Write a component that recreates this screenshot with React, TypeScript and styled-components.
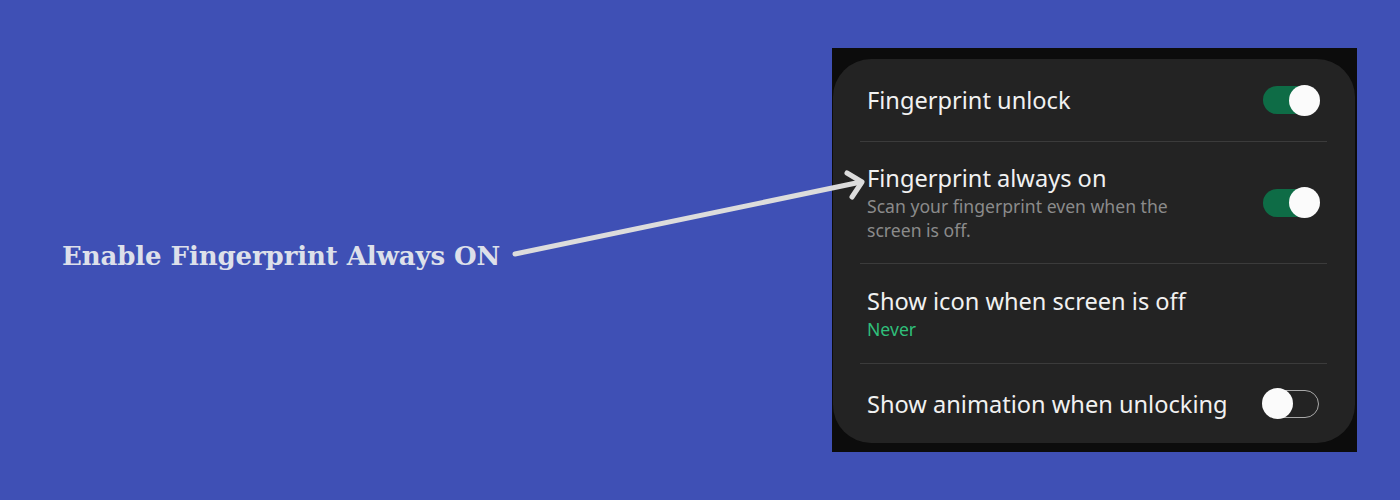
import React from 'react'
import styled, { createGlobalStyle } from 'styled-components'

const Global = createGlobalStyle`
  html, body {
    margin: 0;
    padding: 0;
    background: #3f50b5;
  }
`

const Stage = styled.div`
  position: relative;
  width: 1400px;
  height: 500px;
  display: flex;
  align-items: center;
  padding: 0 43px 0 62px;
  box-sizing: border-box;
  background: #3f50b5;
  overflow: hidden;
`

const Caption = styled.div`
  margin-top: 12px;
  font-family: 'DejaVu Serif', 'Liberation Serif', serif;
  font-weight: bold;
  font-size: 26px;
  color: #dde0ea;
  letter-spacing: -0.1px;
  white-space: nowrap;
`

const Pointer = styled.svg`
  position: absolute;
  left: 0;
  top: 0;
  pointer-events: none;
`

const Frame = styled.div`
  margin-left: auto;
  width: 525px;
  height: 404px;
  padding: 11px 2px 9px 1px;
  box-sizing: border-box;
  background: #0c0c0c;
`

const Card = styled.div`
  height: 100%;
  border-radius: 38px;
  background: #232323;
  display: flex;
  flex-direction: column;
  font-family: 'Noto Sans', 'Open Sans', sans-serif;
`

const Row = styled.div<{ h: number }>`
  height: ${(p) => p.h}px;
  display: flex;
  align-items: center;
  padding: 0 36px 0 34px;
  box-sizing: border-box;
`

const Divider = styled.div`
  height: 1px;
  margin: 0 28px 0 27px;
  background: #3b3b3b;
`

const TextCol = styled.div`
  flex: 1;
  display: flex;
  flex-direction: column;
`

const Title = styled.div`
  font-size: 23.6px;
  line-height: 30px;
  color: #f1f1f1;
`

const Sub = styled.div<{ accent?: boolean }>`
  font-size: 17.6px;
  line-height: 24px;
  margin-top: 1px;
  color: ${(p) => (p.accent ? '#2fbf7a' : '#8b8b8b')};
  max-width: 340px;
`

const Track = styled.div<{ on: boolean }>`
  position: relative;
  width: 56px;
  height: 28px;
  border-radius: 14px;
  box-sizing: border-box;
  background: ${(p) => (p.on ? '#0e6c46' : 'transparent')};
  border: ${(p) => (p.on ? 'none' : '1.5px solid #a9a9a9')};
  flex-shrink: 0;
`

const Thumb = styled.div<{ on: boolean }>`
  position: absolute;
  top: 50%;
  width: 31px;
  height: 31px;
  margin-top: -15.5px;
  border-radius: 50%;
  background: #fbfbfb;
  ${(p) => (p.on ? 'right: -1px;' : 'left: -2px;')}
`

function Toggle({ on }: { on: boolean }) {
  return (
    <Track on={on}>
      <Thumb on={on} />
    </Track>
  )
}

export default function App() {
  return (
    <>
      <Global />
      <Stage>
        <Caption>Enable Fingerprint Always ON</Caption>

        <Frame>
          <Card>
            <Row h={82}>
              <TextCol>
                <Title>Fingerprint unlock</Title>
              </TextCol>
              <Toggle on />
            </Row>
            <Divider />
            <Row h={121}>
              <TextCol>
                <Title>Fingerprint always on</Title>
                <Sub>Scan your fingerprint even when the screen is off.</Sub>
              </TextCol>
              <Toggle on />
            </Row>
            <Divider />
            <Row h={99}>
              <TextCol>
                <Title>Show icon when screen is off</Title>
                <Sub accent>Never</Sub>
              </TextCol>
            </Row>
            <Divider />
            <Row h={79}>
              <TextCol>
                <Title>Show animation when unlocking</Title>
              </TextCol>
              <Toggle on={false} />
            </Row>
          </Card>
        </Frame>

        <Pointer width="1400" height="500" viewBox="0 0 1400 500">
          <g stroke="#dcdcdc" strokeWidth="5" strokeLinecap="round" strokeLinejoin="round" fill="none">
            <path d="M515 254 L861 182" />
            <path d="M847 173 L862 182 L852 197" />
          </g>
        </Pointer>
      </Stage>
    </>
  )
}
